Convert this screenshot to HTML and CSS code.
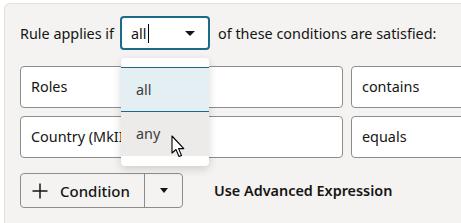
FILE: index.html
```html
<!doctype html>
<html>
<head>
<meta charset="utf-8">
<title>Rule conditions</title>
<link rel="stylesheet" href="styles.css">
</head>
<body>
<div class="panel">
  <div class="header">
    <span class="label">Rule applies if</span>
    <div class="select">
      <span class="select-value">all<span class="caret-line"></span></span>
      <span class="tri"></span>
      <ul class="menu">
        <li class="opt selected">all</li>
        <li class="opt hover">any</li>
      </ul>
    </div>
    <span class="label">of these conditions are satisfied:</span>
  </div>

  <div class="rows">
    <div class="row">
      <div class="field f1">Roles</div>
      <div class="field f2"></div>
      <div class="field f3">contains</div>
    </div>
    <div class="row">
      <div class="field f1">Country (MkII)</div>
      <div class="field f2"></div>
      <div class="field f3">equals</div>
    </div>
  </div>

  <div class="actions">
    <div class="split-btn">
      <span class="btn-main">
        <svg width="16" height="16" viewBox="0 0 16 16"><path d="M8 0.5v15M0.5 8h15" stroke="#161513" stroke-width="1.5" fill="none"/></svg>
        Condition
      </span>
      <span class="btn-drop"><span class="tri"></span></span>
    </div>
    <span class="adv">Use Advanced Expression</span>
  </div>

  <svg class="pointer" width="17" height="25" viewBox="0 0 17 25">
    <path d="M1 1 L1 18 L5 14.5 L8 21.5 L10.5 20.5 L7.6 13.6 L12.8 13.6 Z" fill="#fff" stroke="#000" stroke-width="1.1" stroke-linejoin="round"/>
  </svg>
</div>
</body>
</html>
```

FILE: styles.css
```css
body {
  margin: 0;
  background: #ffffff;
  font-family: "Noto Sans", "Open Sans", sans-serif;
  font-size: 14.4px;
  color: #161513;
  overflow: hidden;
  height: 223px;
}

.panel {
  position: relative;
  margin: 3px 0 0 4px;
  height: 207px;
  padding: 12px 0 0 15px;
  background: #f4f3f1;
  border-top: 1px solid #e2e1df;
  border-left: 1px solid #e2e1df;
  border-top-left-radius: 6px;
  overflow: hidden;
}

.header {
  display: flex;
  align-items: center;
  gap: 6px;
  height: 34px;
}

.select {
  position: relative;
  width: 77px;
  height: 30px;
  border: 2px solid #1b6b88;
  border-radius: 4px;
  background: #fff;
  display: flex;
  align-items: center;
  padding: 0 0 0 9px;
  margin-right: 2px;
  box-sizing: content-box;
}

.select-value {
  flex: 1;
  display: flex;
  align-items: center;
}

.caret-line {
  display: inline-block;
  width: 1px;
  height: 19px;
  background: #000;
  margin-left: 1px;
}

.tri {
  width: 0;
  height: 0;
  border-left: 5px solid transparent;
  border-right: 5px solid transparent;
  border-top: 5px solid #161513;
}

.select > .tri {
  margin-right: 13px;
}

.menu {
  position: absolute;
  left: -1px;
  top: 40px;
  width: 88px;
  margin: 0;
  padding: 9px 0 10px;
  list-style: none;
  background: #fff;
  border-radius: 4px;
  box-shadow: 0 3px 8px rgba(0, 0, 0, 0.16);
  z-index: 2;
}

.opt {
  height: 44px;
  line-height: 44px;
  padding-left: 15px;
  color: #3c3b39;
}

.opt.selected {
  background: #e4eff4;
  border-top: 1px solid #1b6b88;
  border-bottom: 1px solid #1b6b88;
  height: 43px;
  line-height: 43px;
}

.opt.hover {
  background: #ecebe9;
}

.rows {
  margin-top: 16px;
  display: flex;
  flex-direction: column;
  gap: 8px;
}

.row {
  display: flex;
  gap: 8px;
}

.field {
  flex: none;
  height: 40px;
  line-height: 40px;
  border: 1px solid #8e8d8b;
  border-radius: 4px;
  background: #fff;
  padding-left: 10px;
  white-space: nowrap;
  overflow: hidden;
  box-sizing: content-box;
}

.f1 { width: 160px; }
.f2 { width: 131px; }
.f3 { width: 160px; }

.actions {
  margin-top: 15px;
  display: flex;
  align-items: center;
  gap: 31px;
}

.split-btn {
  display: flex;
  height: 33px;
  border: 1px solid #8e8d8b;
  border-radius: 4px;
}

.btn-main {
  display: flex;
  align-items: center;
  gap: 12px;
  width: 112px;
  padding-left: 11px;
  border-right: 1px solid #8e8d8b;
  font-weight: 500;
  font-size: 15px;
}

.btn-drop {
  width: 37px;
  display: flex;
  align-items: center;
  justify-content: center;
}

.btn-drop .tri {
  border-left-width: 4.5px;
  border-right-width: 4.5px;
  border-top-width: 5px;
}

.adv {
  font-weight: 600;
}

.pointer {
  position: absolute;
  left: 166px;
  top: 131px;
  z-index: 3;
}
```
